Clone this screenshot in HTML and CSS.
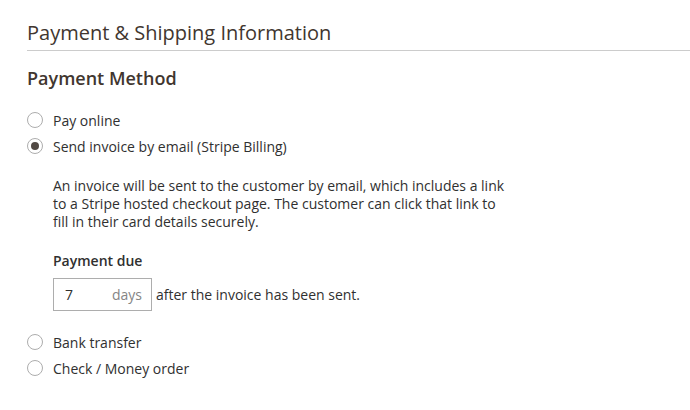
FILE: index.html
```html
<!DOCTYPE html>
<html lang="en">

<head>
    <meta charset="UTF-8">
    <meta name="viewport" content="width=device-width, initial-scale=1.0">
    <title>Payment &amp; Shipping Information</title>
    <link rel="stylesheet" href="styles.css">
</head>

<body>
    <div class="section">
        <h2 class="section-title">Payment &amp; Shipping Information</h2>
        <h3 class="block-title">Payment Method</h3>

        <div class="methods">
            <label class="method">
                <input type="radio" name="payment">
                <span>Pay online</span>
            </label>
            <label class="method">
                <input type="radio" name="payment" checked>
                <span>Send invoice by email (Stripe Billing)</span>
            </label>

            <div class="method-details">
                <p class="note">An invoice will be sent to the customer by email, which includes a link
                    to a Stripe hosted checkout page. The customer can click that link to
                    fill in their card details securely.</p>
                <div class="field-label">Payment due</div>
                <div class="due-row">
                    <div class="days-input">
                        <input type="text" value="7">
                        <span class="addon">days</span>
                    </div>
                    <span>after the invoice has been sent.</span>
                </div>
            </div>

            <label class="method">
                <input type="radio" name="payment">
                <span>Bank transfer</span>
            </label>
            <label class="method">
                <input type="radio" name="payment">
                <span>Check / Money order</span>
            </label>
        </div>
    </div>
</body>

</html>
```

FILE: styles.css
```css
body {
    margin: 0;
    background: #fff;
    font-family: "Open Sans", sans-serif;
    color: #303030;
    font-size: 14px;
}

.section {
    padding: 20px 0 0 27px;
}

.section-title {
    margin: 0;
    padding-bottom: 4px;
    font-size: 20px;
    font-weight: 400;
    line-height: 26px;
    color: #41362f;
    border-bottom: 1px solid #cccccc;
}

.block-title {
    margin: 14px 0 0;
    font-size: 18px;
    font-weight: 600;
    line-height: 26px;
    color: #41362f;
}

.methods {
    margin-top: 16px;
}

.method {
    display: flex;
    align-items: center;
    gap: 10px;
    height: 26px;
    cursor: pointer;
}

.method input[type="radio"] {
    appearance: none;
    -webkit-appearance: none;
    margin: 0;
    width: 16px;
    height: 16px;
    border: 1px solid #adadad;
    border-radius: 50%;
    background: #fff;
    display: grid;
    place-content: center;
}

.method input[type="radio"]:checked::before {
    content: "";
    width: 8px;
    height: 8px;
    border-radius: 50%;
    background: #514943;
}

.method-details {
    padding: 18px 0 18px 26px;
}

.note {
    margin: 0;
    width: 460px;
    line-height: 18px;
}

.field-label {
    margin-top: 21px;
    font-weight: 600;
    line-height: 18px;
}

.due-row {
    display: flex;
    align-items: center;
    gap: 4px;
    margin-top: 8px;
}

.days-input {
    display: flex;
    align-items: center;
    width: 97px;
    height: 31px;
    border: 1px solid #adadad;
    background: #fff;
}

.days-input input {
    width: 40px;
    border: none;
    outline: none;
    padding: 0 0 0 11px;
    font-family: inherit;
    font-size: 14px;
    color: #303030;
    background: transparent;
}

.addon {
    margin-left: auto;
    padding-right: 9px;
    color: #858585;
}
```
